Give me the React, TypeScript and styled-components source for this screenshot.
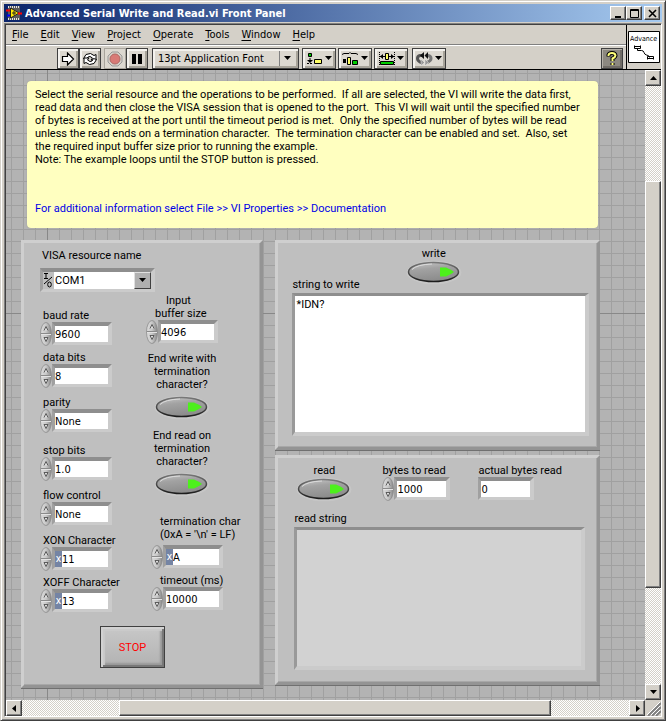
import React, { useId, useState } from "react";
import styled, { createGlobalStyle, css } from "styled-components";

const GlobalStyle = createGlobalStyle`
  *, *::before, *::after { box-sizing: border-box; }
  html, body { margin: 0; height: 100%; }
  #root { height: 100%; }
  body, button, input, select, textarea {
    font-family: Roboto, "Liberation Sans", sans-serif;
    font-size: 11px;
    line-height: 13px;
    color: #000;
  }
  button, input, select, textarea { margin: 0; padding: 0; border: 0; border-radius: 0; background: none; outline: none; }
  p { margin: 0; }
`;

const face = "#d4d0c8";

/* ---------- window chrome ---------- */

const Window = styled.div`
  display: flex;
  flex-direction: column;
  min-height: 100vh;
  padding: 2px;
  background: ${face};
  border: 1px solid ${face};
  border-right-color: #404040;
  border-bottom-color: #404040;
  box-shadow: inset 1px 1px #fff, inset -1px -1px #808080;
`;

const TitleBar = styled.header`
  display: flex;
  align-items: center;
  gap: 3px;
  height: 18px;
  margin: 1px 1px 0;
  padding: 0 2px 0 2px;
  background: linear-gradient(90deg, #0a246a, #a6caf0);
`;

const Title = styled.h1`
  flex: 1;
  margin: 0;
  color: #fff;
  font-family: "DejaVu Sans Condensed", "DejaVu Sans", sans-serif;
  font-size: 11px;
  font-weight: 700;
  white-space: nowrap;
`;

const raised = css`
  background: ${face};
  border: 1px solid;
  border-color: #fff #404040 #404040 #fff;
  box-shadow: inset -1px -1px #808080;
`;

const Caption = styled.div`
  display: flex;
`;

const CaptionButton = styled.button<{ $apart?: boolean }>`
  ${raised}
  display: grid;
  place-items: center;
  width: 16px;
  height: 14px;
  margin-left: ${(p) => (p.$apart ? 2 : 0)}px;
`;

const Client = styled.div`
  flex: 1;
  display: flex;
  flex-direction: column;
  margin: 1px 1px 1px;
  border: 1px solid;
  border-color: #808080 #fff #fff #808080;
  box-shadow: inset 1px 1px #404040;
  padding: 1px 0 0 1px;
`;

const Head = styled.div`
  display: flex;
  height: 45px;
  border-bottom: 1px solid #000;
`;

const Bars = styled.div`
  flex: 1;
  display: flex;
  flex-direction: column;
`;

const MenuBar = styled.nav`
  display: flex;
  align-items: center;
  height: 20px;
  border-bottom: 1px solid #808080;
`;

const MenuItem = styled.button`
  padding: 0 6px;
  font-family: "DejaVu Sans Condensed", "DejaVu Sans", sans-serif;
  line-height: 16px;
  u { text-underline-offset: 2px; }
`;

const ToolBar = styled.div`
  flex: 1;
  display: flex;
  align-items: flex-start;
  padding: 2px 3px 0 51px;
  border-top: 1px solid #fff;
`;

const ToolButton = styled.button<{ $wide?: boolean; $gap?: number; $flat?: boolean; $dark?: boolean }>`
  display: flex;
  align-items: center;
  justify-content: center;
  gap: 2px;
  width: ${(p) => (p.$wide ? 34 : 22)}px;
  height: 21px;
  margin-left: ${(p) => p.$gap ?? 0}px;
  background: ${(p) => (p.$dark ? "#8c8880" : "#dcd8d0")};
  border: 1px solid ${(p) => (p.$flat ? "#a8a49c" : "#404040")};
  box-shadow: ${(p) =>
    p.$flat
      ? "none"
      : p.$dark
        ? "inset 1px 1px #b4b0a8, inset -2px -2px #706c66"
        : "inset 2px 2px #f4f2ee, inset -2px -2px #a8a49a"};
`;

const FontPicker = styled.div`
  display: flex;
  align-items: center;
  width: 147px;
  height: 21px;
  margin-left: 4px;
  padding: 0 7px 0 5px;
  background: #dcd8d0;
  border: 1px solid #404040;
  box-shadow: inset 2px 2px #f4f2ee, inset -2px -2px #a8a49a;
`;

const PlainSelect = styled.select`
  flex: 1;
  min-width: 0;
  appearance: none;
`;

const FontSelect = styled(PlainSelect)`
  height: 15px;
  font-family: "DejaVu Sans Condensed", "DejaVu Sans", sans-serif;
  border-right: 1px solid #808080;
  margin-right: 4px;
`;

const Spacer = styled.span`
  flex: 1;
`;

const ViIcon = styled.div`
  display: flex;
  justify-content: center;
  align-items: flex-start;
  width: 35px;
  padding-top: 6px;
  border-left: 1px solid #000;
`;

/* ---------- scroll frame ---------- */

const Scroller = styled.div`
  flex: 1;
  display: grid;
  grid-template-columns: minmax(0, 1fr) 16px;
  grid-template-rows: 1fr 16px;
`;

const Track = styled.div<{ $vertical?: boolean }>`
  display: flex;
  flex-direction: ${(p) => (p.$vertical ? "column" : "row")};
  background: repeating-conic-gradient(#fff 0 25%, ${face} 0 50%) 0 0 / 2px 2px;
`;

const ScrollButton = styled.button`
  ${raised}
  display: grid;
  place-items: center;
  flex: none;
  width: 16px;
  height: 16px;
`;

const Run = styled.span<{ $size: number }>`
  flex: ${(p) => p.$size} 0 0;
`;

const Thumb = styled(Run)`
  ${raised}
`;

const Corner = styled.div`
  display: grid;
  place-items: end;
`;

const Canvas = styled.main`
  min-width: 0;
  padding: 11px 45px 11px 15px;
  background-color: #b3b3b3;
  background-image: linear-gradient(90deg, #888 1px, transparent 1px),
    linear-gradient(#888 1px, transparent 1px),
    linear-gradient(90deg, #a0a0a0 1px, transparent 1px),
    linear-gradient(#a0a0a0 1px, transparent 1px);
  background-size: 1200px 100%, 100% 1200px, 12px 12px, 12px 12px;
  background-position: 41px 0, 0 243px, 5px 0, 0 3px;
`;

const Note = styled.section`
  margin: 0 2px 12px 6px;
  padding: 7px 8px 12px;
  min-height: 147px;
  background: #ffffc0;
  border-radius: 4px;
  box-shadow: 0 0 1px #888;
  white-space: pre-wrap;
`;

const More = styled.p`
  margin-top: 36px;
  color: #0000e8;
`;

const Boards = styled.div`
  display: grid;
  grid-template-columns: minmax(242px, 242fr) minmax(0, 324fr);
  gap: 12px;
  align-items: start;
`;

const Stack = styled.div`
  display: flex;
  flex-direction: column;
  gap: 5px;
`;

const Panel = styled.section<{ $pad: string }>`
  display: flex;
  flex-direction: column;
  padding: ${(p) => p.$pad};
  background: #bfbfbf;
  border: 3px solid;
  border-color: #cfcfcf #949494 #949494 #cfcfcf;
  box-shadow: inset -1px -1px #a8a8a8, 0 1px #707070;
`;

const Columns = styled.div`
  display: grid;
  grid-template-columns: 106px 1fr;
  margin-top: 2px;
`;

const Column = styled.div<{ $drop?: number; $indent?: number }>`
  display: flex;
  flex-direction: column;
  padding-top: ${(p) => p.$drop ?? 0}px;
  padding-left: ${(p) => p.$indent ?? 0}px;
`;

/* ---------- controls ---------- */

const Label = styled.label<{ $indent?: number; $center?: boolean; $tall?: boolean }>`
  padding-left: ${(p) => p.$indent ?? 0}px;
  padding-bottom: ${(p) => (p.$tall ? 4 : 0)}px;
  text-align: ${(p) => (p.$center ? "center" : "left")};
  white-space: pre;
`;

const FieldBox = styled.div<{ $gap?: number }>`
  display: flex;
  flex-direction: column;
  margin-top: ${(p) => p.$gap ?? 0}px;
`;

const ControlRow = styled.div`
  display: flex;
  align-items: center;
  height: 23px;
`;

const inset = css`
  border: solid;
  border-width: 4px 4px 3px 3px;
  border-color: #8e8e8e #cbcbcb #cbcbcb #a0a0a0;
`;

const Well = styled.div<{ $w: number }>`
  ${inset}
  display: flex;
  width: ${(p) => p.$w}px;
  height: 23px;
  background: #fff;
`;

const Radix = styled.span`
  flex: none;
  width: 7px;
  color: #fff;
  background: #7484a4;
  text-align: center;
  line-height: 15px;
`;

const TextInput = styled.input`
  flex: 1;
  min-width: 0;
  font-family: "DejaVu Sans Condensed", "DejaVu Sans", sans-serif;
`;

const ResourceWell = styled.div`
  ${inset}
  display: flex;
  align-items: stretch;
  width: 115px;
  height: 24px;
  background: #bfbfbf;
`;

const ResourceSelect = styled(PlainSelect)`
  background: #fff;
  padding-left: 1px;
  margin-left: 1px;
`;

const DropFace = styled.span`
  display: grid;
  place-items: center;
  width: 17px;
  background: #b0b0b0;
  border: 1px solid;
  border-color: #e0e0e0 #404040 #404040 #e0e0e0;
`;

const Spinner = styled.span`
  display: flex;
  width: 12px;
  height: 24px;
`;

const SwitchButton = styled.button`
  display: block;
  width: 56px;
  height: 25px;
`;

const SwitchBox = styled.div<{ $gap?: number; $w: number }>`
  display: flex;
  flex-direction: column;
  align-items: center;
  width: ${(p) => p.$w}px;
  margin-top: ${(p) => p.$gap ?? 0}px;
`;

const StopButton = styled.button`
  align-self: flex-start;
  width: 65px;
  height: 42px;
  margin: 14px 0 0 60px;
  color: #f00;
  background: linear-gradient(#c8c8c8, #b2b2b2);
  border: 1px solid #404040;
  box-shadow: inset 2px 2px #d2d2d2, inset -2px -2px #787878, inset 4px 4px 1px #cacaca, inset -4px -4px 2px #989898;
`;

const TextArea = styled.textarea<{ $grey?: boolean }>`
  display: block;
  width: 100%;
  height: 143px;
  margin-top: 2px;
  resize: none;
  padding: 2px 1px;
  background: ${(p) => (p.$grey ? "#d2d2d2" : "#fff")};
  border: solid;
  border-width: 3px 4px 4px 3px;
  border-color: #8e8e8e #cbcbcb #cbcbcb #999;
`;

const WriteHead = styled.div`
  display: grid;
  grid-template-columns: 1fr auto 1fr;
  height: 44px;
  padding-right: 14px;
`;

const WriteLabel = styled(Label)`
  align-self: end;
`;

const ReadHead = styled.div`
  display: flex;
  align-items: flex-start;
  gap: 28px;
  margin-bottom: 10px;
`;

/* ---------- drawings ---------- */

const Arrow = ({ dir = "down" }: { dir?: "up" | "down" | "left" | "right" }) => {
  const d = {
    down: "M0 1h7L3.5 5z",
    up: "M0 5h7L3.5 1z",
    left: "M5 0v7L1 3.5z",
    right: "M2 0v7L6 3.5z",
  }[dir];
  return (
    <svg width="7" height="7" viewBox="0 0 7 7" aria-hidden="true">
      <path d={d} />
    </svg>
  );
};

const AppIcon = () => (
  <svg width="16" height="16" viewBox="0 0 16 16" aria-hidden="true">
    <path d="M2 1h12v14H2z" fill="#5c5c5c" />
    <path d="M2 2h12M2 14h12" stroke="#e4e4e4" strokeWidth="2" strokeDasharray="1 1" />
    <path d="M4.500 3v10L13 8z" fill="#ffe800" stroke="#222" />
    <path d="M0 5.500h4M12 8.500h4" stroke="#f00" strokeWidth="2" />
    <path d="M1 10.500h3" stroke="#00f" strokeWidth="2" />
    <path d="M6 8h4M8 6v4" stroke="#222" />
  </svg>
);

const RunIcon = () => (
  <svg width="14" height="14" viewBox="0 0 14 14" aria-hidden="true">
    <path d="M1.500 4.500h5v-3.500l6 6-6 6v-3.500h-5z" fill="#fff" stroke="#000" strokeWidth="1.200" />
  </svg>
);

const LoopIcon = () => (
  <svg width="16" height="14" viewBox="0 0 16 14" aria-hidden="true" fill="#fff" stroke="#000">
    <path d="M1.500 6.500 4 2.500 8.500 1.500 12 3.500 14 2.500v5.500H9l1.500-2L8 4.500 6 5 4.500 7.500z" />
    <path d="M14.500 7.500 12 11.500 7.500 12.500 4 10.500 2 11.500V6h5L5.500 8 8 9.500 10 9l1.500-2.500z" />
  </svg>
);

const AbortIcon = () => (
  <svg width="16" height="16" viewBox="0 0 16 16" aria-hidden="true">
    <path d="M5 1h6l4 4v6l-4 4H5l-4-4V5z" fill="#d4d0c8" stroke="#999" />
    <circle cx="8" cy="8" r="5" fill="#d87a76" stroke="#b06864" />
  </svg>
);

const PauseIcon = () => (
  <svg width="12" height="12" viewBox="0 0 12 12" aria-hidden="true">
    <path d="M1 1h4v10H1zM7 1h4v10H7z" />
  </svg>
);

const AlignIcon = () => (
  <svg width="16" height="14" viewBox="0 0 16 14" aria-hidden="true">
    <path d="M1.500 1.500h3v3h-3z" fill="#0c0" stroke="#000" />
    <path d="M3 6v3" stroke="#000" />
    <path d="M0 8h6l-3 3z" />
    <path d="M0 11.500h6" stroke="#000" strokeDasharray="2 1" />
    <path d="M7.500 7.500h7v4h-7z" fill="#ff6" stroke="#000" />
  </svg>
);

const DistributeIcon = () => (
  <svg width="17" height="14" viewBox="0 0 17 14" aria-hidden="true">
    <path d="M0 2.500 2 1.500h5l1-1 1 1h5l2 1" fill="none" stroke="#000" />
    <path d="M1 7h3v4H1z" />
    <path d="M5.500 5.500h3v7h-3z" fill="#ff6" stroke="#000" />
    <path d="M10.500 8.500h5v4h-5z" fill="#0c0" stroke="#000" />
  </svg>
);

const ResizeIcon = () => (
  <svg width="16" height="14" viewBox="0 0 16 14" aria-hidden="true">
    <path d="M.5 0v14M15.500 0v14" stroke="#000" strokeDasharray="1 1" />
    <path d="M1 4.500 4 2v5zM15 4.500 12 2v5z" />
    <path d="M1 4.500h5M10 4.500h5" stroke="#000" />
    <path d="M6.500 1.500h3v6h-3z" fill="#ff6" stroke="#000" />
    <path d="M1.500 9.500h13v3h-13z" fill="#0c0" stroke="#000" />
  </svg>
);

const ReorderIcon = () => (
  <svg width="17" height="14" viewBox="0 0 17 14" aria-hidden="true" fill="none">
    <path d="M7 3.500H4Q1.500 4 1.500 6.500T5 10.500h2" stroke="#555" strokeWidth="3" />
    <path d="M10 3.500h2q3 .5 3 3T11 10.500" stroke="#777" strokeWidth="3" />
    <path d="M8 0v7L4 3.500zM12 0v7L8.500 3.500z" fill="#111" />
    <path d="M5 7v7l3.500-3.500zM9 7v7l3.500-3.500z" fill="#999" stroke="#eee" strokeWidth=".5" />
  </svg>
);

const HelpIcon = () => (
  <svg width="12" height="16" viewBox="0 0 12 16" aria-hidden="true" fill="none">
    <path d="M2.500 5.500V4q.5-2 3.500-2t3.500 2.500Q9.500 6 6.500 7.500V10M6.500 12v2" stroke="#000" strokeWidth="4" />
    <path d="M2.500 5V4q.5-2 3.500-2t3.500 2.500Q9.500 6 6.500 7.500V10M6.500 12v2" stroke="#ffff7a" strokeWidth="2" />
  </svg>
);

const ViGlyph = () => (
  <svg width="32" height="32" viewBox="0 0 32 32" aria-hidden="true">
    <path d="M.5.5h31v31H.5z" fill="#fff" stroke="#000" />
    <text x="2" y="10" fontSize="7" fontFamily="DejaVu Sans Condensed, sans-serif">
      Advance
    </text>
    <path d="M7 15.500h5M6.500 14.500v3h6v-3M9.500 18v1.500h4q2 0 2.500 2t2.500 2.500 3 1.500v1M19.500 28.500v-3h6v3M20 27.500h5" fill="none" stroke="#000" />
  </svg>
);

const GripIcon = () => (
  <svg width="14" height="14" viewBox="0 0 14 14" aria-hidden="true">
    <path d="M1 14 14 1M5 14l9-9M9 14l5-5" stroke="#808080" strokeWidth="2" />
    <path d="M0 13 13 0M4 13l9-9M8 13l5-5" stroke="#fff" />
  </svg>
);

const IoGlyph = () => (
  <svg width="10" height="17" viewBox="0 0 10 17" aria-hidden="true" fill="none" stroke="#000">
    <path d="M1 1.500h4M3 1.500v5M1 6.500h4M1 12l8-7" />
    <ellipse cx="6.500" cy="12.500" rx="1.800" ry="2.500" />
  </svg>
);

const SpinnerDrawing = () => {
  const id = useId();
  return (
    <svg width="12" height="24" viewBox="0 0 12 24" aria-hidden="true">
      <defs>
        <linearGradient id={id}>
          <stop offset="0" stopColor="#dedede" />
          <stop offset=".5" stopColor="#c8c8c8" />
          <stop offset="1" stopColor="#858585" />
        </linearGradient>
      </defs>
      <ellipse cx="6" cy="12" rx="5.500" ry="11.500" fill={`url(#${id})`} stroke="#8c8c8c" strokeWidth=".8" />
      <path d="M1 11.500h10" stroke="#8a8a8a" />
      <path d="M1 12.500h10" stroke="#e4e4e4" />
      <path d="M4 8.500 6 4.500l2 4M4 15.500h4l-2 4z" fill="#ddd" stroke="#505050" strokeWidth=".9" />
    </svg>
  );
};

const SwitchDrawing = ({ on }: { on: boolean }) => {
  const id = useId();
  return (
    <svg width="56" height="25" viewBox="0 0 56 25" aria-hidden="true">
      <defs>
        <linearGradient id={`${id}f`} x2=".3" y2="1">
          <stop offset="0" stopColor="#c8c8c8" />
          <stop offset=".4" stopColor="#a2a2a2" />
          <stop offset="1" stopColor="#8c8c8c" />
        </linearGradient>
        <linearGradient id={`${id}s`} x2="0" y2="1">
          <stop offset="0" stopColor="#777" />
          <stop offset="1" stopColor="#1c1c1c" />
        </linearGradient>
      </defs>
      <ellipse cx="28" cy="12.500" rx="27.500" ry="11.800" fill="#cbcbcb" opacity=".6" />
      <ellipse cx="27.500" cy="12" rx="25" ry="9.500" fill={`url(#${id}f)`} stroke={`url(#${id}s)`} strokeWidth="1.500" />
      <path d="M6 9.500Q11 4.500 26 4" fill="none" stroke="#dcdcdc" />
      <path d="M34 7.500h6q5 2 8 4.500-3 2.500-8 4.500h-6z" fill={on ? "#4df01c" : "#3c6a30"} />
    </svg>
  );
};

/* ---------- composite parts ---------- */

type FieldProps = {
  label: string;
  value: string;
  width?: number;
  gap?: number;
  indent?: number;
  hex?: boolean;
  tall?: boolean;
  spinner?: boolean;
};

function Field({ label, value, width = 60, gap, indent = 3, hex, tall, spinner = true }: FieldProps) {
  const id = useId();
  return (
    <FieldBox $gap={gap}>
      <Label htmlFor={id} $indent={indent} $tall={tall}>{label}</Label>
      <ControlRow>
        {spinner && <Spinner><SpinnerDrawing /></Spinner>}
        <Well $w={width}>
          {hex && <Radix>x</Radix>}
          <TextInput id={id} defaultValue={value} readOnly={!spinner} />
        </Well>
      </ControlRow>
    </FieldBox>
  );
}

function Toggle({ label, gap, width = 72, tall }: { label: string; gap?: number; width?: number; tall?: boolean }) {
  const id = useId();
  const [on, setOn] = useState(true);
  return (
    <SwitchBox $gap={gap} $w={width}>
      <Label htmlFor={id} $center $tall={tall}>{label}</Label>
      <SwitchButton id={id} type="button" role="switch" aria-checked={on} onClick={() => setOn(!on)}>
        <SwitchDrawing on={on} />
      </SwitchButton>
    </SwitchBox>
  );
}

const menus = ["File", "Edit", "View", "Project", "Operate", "Tools", "Window", "Help"];

const intro = [
  "Select the serial resource and the operations to be performed.  If all are selected, the VI will write the data first,",
  "read data and then close the VISA session that is opened to the port.  This VI will wait until the specified number",
  "of bytes is received at the port until the timeout period is met.  Only the specified number of bytes will be read",
  "unless the read ends on a termination character.  The termination character can be enabled and set.  Also, set",
  "the required input buffer size prior to running the example.",
  "Note: The example loops until the STOP button is pressed.",
].join("\n");

export default function App() {
  return (
    <>
      <GlobalStyle />
      <Window>
        <TitleBar>
          <AppIcon />
          <Title>Advanced Serial Write and Read.vi Front Panel</Title>
          <Caption>
            <CaptionButton aria-label="Minimize">
              <svg width="9" height="9"><path d="M1 7h6v2H1z" /></svg>
            </CaptionButton>
            <CaptionButton aria-label="Maximize">
              <svg width="9" height="9"><path d="M.5.5h8v8h-8zM0 1.500h9" fill="none" stroke="#000" /></svg>
            </CaptionButton>
            <CaptionButton aria-label="Close" $apart>
              <svg width="9" height="9"><path d="M1 1l7 7M8 1 1 8" stroke="#000" strokeWidth="1.600" /></svg>
            </CaptionButton>
          </Caption>
        </TitleBar>
        <Client>
          <Head>
            <Bars>
              <MenuBar>
                {menus.map((m) => (
                  <MenuItem key={m}><u>{m[0]}</u>{m.slice(1)}</MenuItem>
                ))}
              </MenuBar>
              <ToolBar>
                <ToolButton aria-label="Run"><RunIcon /></ToolButton>
                <ToolButton aria-label="Run continuously"><LoopIcon /></ToolButton>
                <ToolButton aria-label="Abort" $gap={3} $flat><AbortIcon /></ToolButton>
                <ToolButton aria-label="Pause"><PauseIcon /></ToolButton>
                <FontPicker>
                  <FontSelect aria-label="Font"><option>13pt Application Font</option></FontSelect>
                  <Arrow />
                </FontPicker>
                <ToolButton aria-label="Align" $wide $gap={3}><AlignIcon /><Arrow /></ToolButton>
                <ToolButton aria-label="Distribute" $wide $gap={2}><DistributeIcon /><Arrow /></ToolButton>
                <ToolButton aria-label="Resize" $wide $gap={2}><ResizeIcon /><Arrow /></ToolButton>
                <ToolButton aria-label="Reorder" $wide $gap={4}><ReorderIcon /><Arrow /></ToolButton>
                <Spacer />
                <ToolButton aria-label="Context help" $dark><HelpIcon /></ToolButton>
              </ToolBar>
            </Bars>
            <ViIcon><ViGlyph /></ViIcon>
          </Head>
          <Scroller>
            <Canvas>
              <Note>
                <p>{intro}</p>
                <More>{"For additional information select File >> VI Properties >> Documentation"}</More>
              </Note>
              <Boards>
                <Panel $pad="6px 10px 17px 16px">
                  <Label htmlFor="visa" $indent={2}>VISA resource name</Label>
                  <FieldBox $gap={6}>
                    <ResourceWell>
                      <IoGlyph />
                      <ResourceSelect id="visa"><option>COM1</option></ResourceSelect>
                      <DropFace><Arrow /></DropFace>
                    </ResourceWell>
                  </FieldBox>
                  <Columns>
                    <Column $drop={15}>
                      <Field label="baud rate" value="9600" />
                      <Field label="data bits" value="8" gap={6} />
                      <Field label="parity" value="None" gap={9} />
                      <Field label="stop bits" value="1.0" gap={12} />
                      <Field label="flow control" value="None" gap={9} />
                      <Field label="XON Character" value="11" gap={9} hex />
                      <Field label="XOFF Character" value="13" gap={6} hex />
                    </Column>
                    <Column>
                      <Field label={"    Input\nbuffer size"} value="4096" indent={9} />
                      <Toggle label={"End write with\ntermination\ncharacter?"} gap={9} tall />
                      <Toggle label={"End read on\ntermination\ncharacter?"} gap={9} tall />
                      <Column $indent={5}>
                        <Field label={"termination char\n(0xA = '\\n' = LF)"} value="A" gap={18} indent={9} hex tall />
                        <Field label="timeout (ms)" value="10000" gap={6} indent={9} />
                      </Column>
                    </Column>
                  </Columns>
                  <StopButton>STOP</StopButton>
                </Panel>
                <Stack>
                  <Panel $pad="4px 8px 11px 14px">
                    <WriteHead>
                      <WriteLabel htmlFor="out">string to write</WriteLabel>
                      <Toggle label="write" />
                    </WriteHead>
                    <TextArea id="out" defaultValue="*IDN?" />
                  </Panel>
                  <Panel $pad="6px 12px 12px 16px">
                    <ReadHead>
                      <Toggle label="read" width={60} />
                      <Field label="bytes to read" value="1000" width={56} indent={0} />
                      <Field label="actual bytes read" value="0" width={56} indent={0} spinner={false} />
                    </ReadHead>
                    <Label htmlFor="in">read string</Label>
                    <TextArea id="in" $grey readOnly />
                  </Panel>
                </Stack>
              </Boards>
            </Canvas>
            <Track $vertical>
              <ScrollButton aria-label="Scroll up"><Arrow dir="up" /></ScrollButton>
              <Run $size={95} /><Thumb $size={406} /><Run $size={96} />
              <ScrollButton aria-label="Scroll down"><Arrow /></ScrollButton>
            </Track>
            <Track>
              <ScrollButton aria-label="Scroll left"><Arrow dir="left" /></ScrollButton>
              <Run $size={97} /><Thumb $size={431} /><Run $size={78} />
              <ScrollButton aria-label="Scroll right"><Arrow dir="right" /></ScrollButton>
            </Track>
            <Corner><GripIcon /></Corner>
          </Scroller>
        </Client>
      </Window>
    </>
  );
}
